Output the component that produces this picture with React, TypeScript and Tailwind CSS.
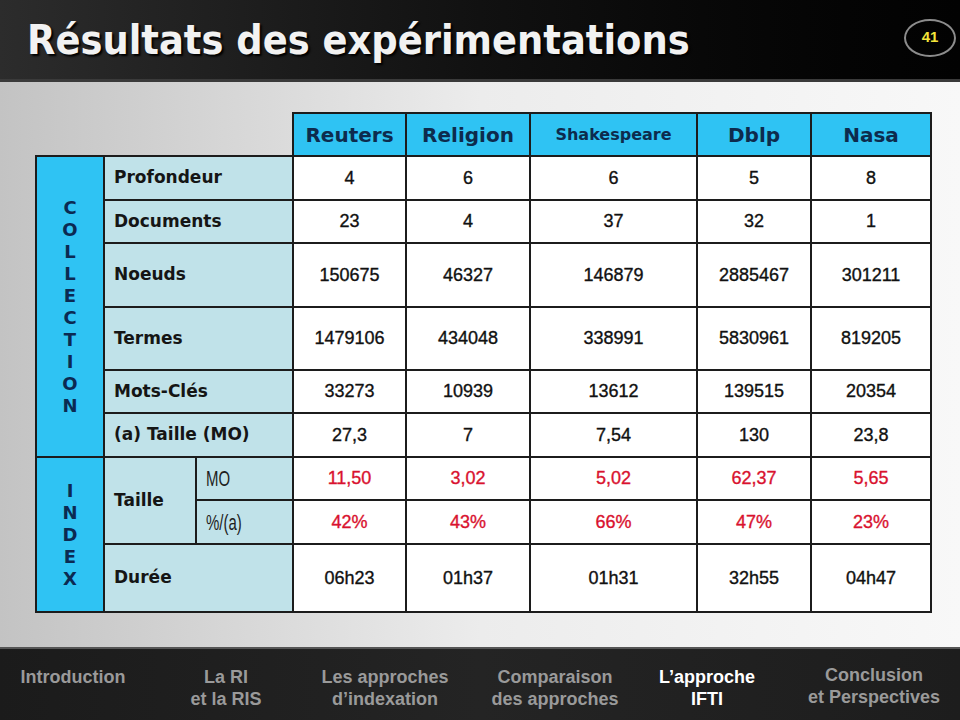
import React from "react";

const cols = ["Reuters", "Religion", "Shakespeare", "Dblp", "Nasa"];

type Row = { label: string; vals: string[]; h: string };

const collection: Row[] = [
  { label: "Profondeur", vals: ["4", "6", "6", "5", "8"], h: "h-[44px]" },
  { label: "Documents", vals: ["23", "4", "37", "32", "1"], h: "h-[43px]" },
  { label: "Noeuds", vals: ["150675", "46327", "146879", "2885467", "301211"], h: "h-[64px]" },
  { label: "Termes", vals: ["1479106", "434048", "338991", "5830961", "819205"], h: "h-[63px]" },
  { label: "Mots-Clés", vals: ["33273", "10939", "13612", "139515", "20354"], h: "h-[43px]" },
  { label: "(a) Taille (MO)", vals: ["27,3", "7", "7,54", "130", "23,8"], h: "h-[44px]" },
];

const mo = ["11,50", "3,02", "5,02", "62,37", "5,65"];
const pct = ["42%", "43%", "66%", "47%", "23%"];
const duree = ["06h23", "01h37", "01h31", "32h55", "04h47"];

const bd = "border-2 border-[#1c1c1c]";
const blue = "bg-[#2fc3f3]";
const light = "bg-[#c0e2e9]";
const labelCls = `${bd} ${light} pl-[9px] text-left align-middle font-['DejaVu_Sans',sans-serif] font-bold text-[17px] text-[#151515]`;
const dataCls = `${bd} bg-white text-center align-middle font-['Liberation_Sans',Arial,sans-serif] text-[18px] text-[#111] [-webkit-text-stroke:0.35px_#111]`;
const redCls = `${bd} bg-white text-center align-middle font-['Liberation_Sans',Arial,sans-serif] text-[18px] text-[#d9122f] [-webkit-text-stroke:0.35px_#d9122f]`;
const narrowCls = `${bd} ${light} pl-[9px] text-left align-middle`;

function Narrow({ text }: { text: string }) {
  return (
    <span className="inline-block origin-left scale-x-[0.68] font-['Liberation_Sans',Arial,sans-serif] text-[22px] text-[#1e1e1e]">
      {text}
    </span>
  );
}

function Vertical({ text }: { text: string }) {
  return (
    <div className="flex flex-col items-center font-['DejaVu_Sans',sans-serif] font-bold text-[18px] leading-[22px] text-[#0b2a52]">
      {text.split("").map((c, i) => (
        <span key={i}>{c}</span>
      ))}
    </div>
  );
}

const nav = [
  { l1: "Introduction", l2: "", w: "w-[146px]", extra: "" },
  { l1: "La RI", l2: "et la RIS", w: "w-[160px]", extra: "" },
  { l1: "Les approches", l2: "d\u2019indexation", w: "w-[158px]", extra: "" },
  { l1: "Comparaison", l2: "des approches", w: "w-[182px]", extra: "" },
  { l1: "L\u2019approche", l2: "IFTI", w: "w-[122px]", extra: "", active: true },
  { l1: "Conclusion", l2: "et Perspectives", w: "w-[192px]", extra: "pl-[20px] -mt-[2px]" },
];

export default function App() {
  return (
    <div className="w-[960px] h-[720px] overflow-hidden flex flex-col bg-white">
      {/* Header */}
      <div className="h-[82px] shrink-0 flex items-center justify-between pl-[27px] pr-[4px] bg-gradient-to-r from-[#2c2c2c] via-[#111] to-[#020202] border-b-[3px] border-[#3a3a3a]">
        <div className="font-['DejaVu_Sans_Condensed','DejaVu_Sans',sans-serif] font-stretch-condensed font-bold text-[41px] leading-none text-[#f2f2f2] [text-shadow:2px_2px_2px_#000] pt-[2px]">
          Résultats des expérimentations
        </div>
        <div className="w-[52px] h-[38px] rounded-[50%] border-2 border-[#8c8c8c] flex items-center justify-center font-['Liberation_Sans',Arial,sans-serif] font-bold text-[15px] text-[#f3e43a] mb-[4px]">
          41
        </div>
      </div>

      {/* Content */}
      <div className="flex-1 bg-gradient-to-r from-[#c3c3c3] via-[#ececec] to-[#f8f8f8] pl-[35px] pt-[30px]">
        <table className="table-fixed border-collapse w-[895px]">
          <colgroup>
            <col className="w-[68px]" />
            <col className="w-[92px]" />
            <col className="w-[97px]" />
            <col className="w-[113px]" />
            <col className="w-[124px]" />
            <col className="w-[167px]" />
            <col className="w-[114px]" />
            <col className="w-[120px]" />
          </colgroup>
          <tbody>
            <tr className="h-[43px]">
              <td colSpan={3} className="border-0 p-0"></td>
              {cols.map((c) => (
                <th
                  key={c}
                  className={`${bd} ${blue} text-center align-middle font-['DejaVu_Sans',sans-serif] font-bold text-[#0d2b4d] ${
                    c === "Shakespeare" ? "text-[16px]" : "text-[20px]"
                  }`}
                >
                  {c}
                </th>
              ))}
            </tr>
            {collection.map((r, i) => (
              <tr key={r.label} className={r.h}>
                {i === 0 && (
                  <td rowSpan={6} className={`${bd} ${blue} align-middle`}>
                    <Vertical text="COLLECTION" />
                  </td>
                )}
                <td colSpan={2} className={labelCls}>
                  {r.label}
                </td>
                {r.vals.map((v, j) => (
                  <td key={j} className={dataCls}>
                    {v}
                  </td>
                ))}
              </tr>
            ))}
            <tr className="h-[43px]">
              <td rowSpan={3} className={`${bd} ${blue} align-middle`}>
                <Vertical text="INDEX" />
              </td>
              <td rowSpan={2} className={labelCls}>
                Taille
              </td>
              <td className={narrowCls}>
                <Narrow text="MO" />
              </td>
              {mo.map((v, j) => (
                <td key={j} className={redCls}>
                  {v}
                </td>
              ))}
            </tr>
            <tr className="h-[44px]">
              <td className={narrowCls}>
                <Narrow text="%/(a)" />
              </td>
              {pct.map((v, j) => (
                <td key={j} className={redCls}>
                  {v}
                </td>
              ))}
            </tr>
            <tr className="h-[68px]">
              <td colSpan={2} className={labelCls}>
                Durée
              </td>
              {duree.map((v, j) => (
                <td key={j} className={dataCls}>
                  {v}
                </td>
              ))}
            </tr>
          </tbody>
        </table>
      </div>

      {/* Bottom nav */}
      <div className="h-[73px] shrink-0 flex items-start pt-[17px] bg-gradient-to-r from-[#1b1b1b] via-[#242424] to-[#1d1d1d] border-t-2 border-[#555]">
        {nav.map((n) => (
          <div
            key={n.l1}
            className={`${n.w} ${n.extra} shrink-0 text-center font-['Liberation_Sans',Arial,sans-serif] font-bold text-[18px] leading-[22px] ${
              n.active ? "text-white" : "text-[#9a9a9a]"
            }`}
          >
            <div>{n.l1}</div>
            {n.l2 && <div>{n.l2}</div>}
          </div>
        ))}
      </div>
    </div>
  );
}
